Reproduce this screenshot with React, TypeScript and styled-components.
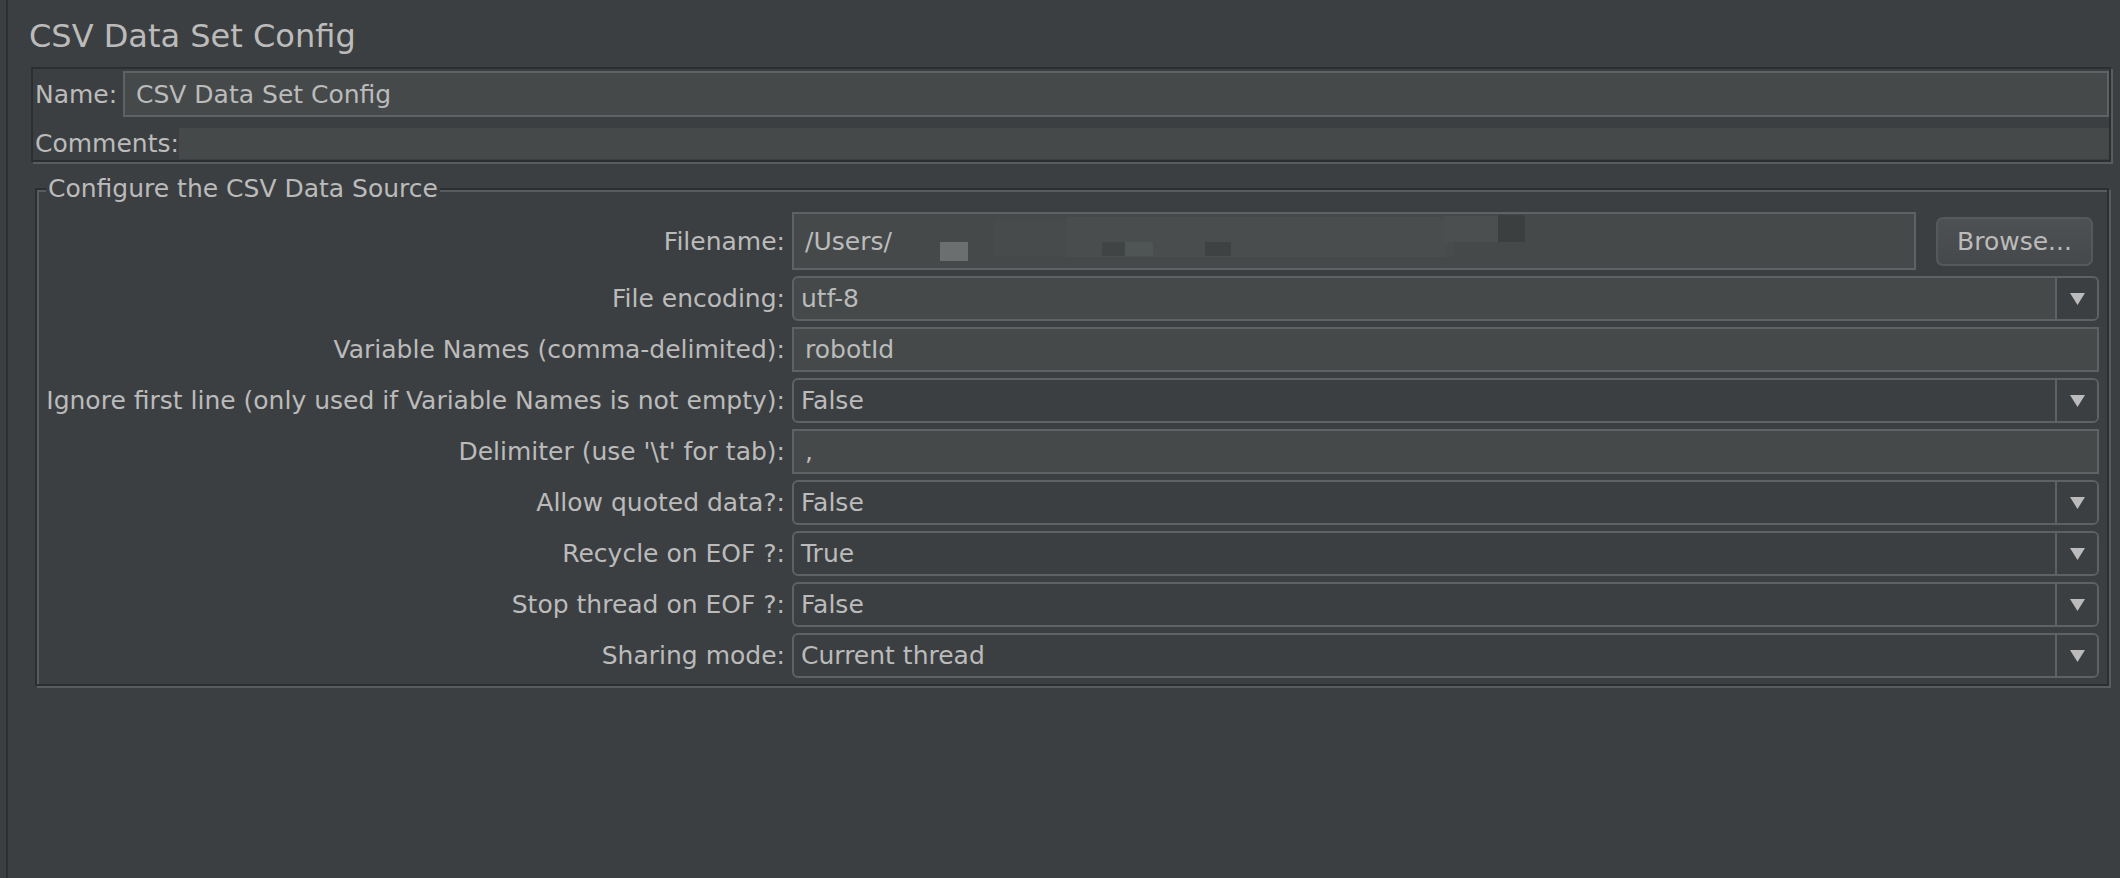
import * as React from 'react';
import styled, { createGlobalStyle } from 'styled-components';

const Colors = {
  background: '#3c3f41',
  field: '#45494a',
  border: '#5f6264',
  dark: '#2c2e2f',
  light: '#595c5e',
  text: '#bbbbbb',
};

const FontSize = 25;

const GlobalStyle = createGlobalStyle`
  html, body {
    margin: 0;
    padding: 0;
    background: ${Colors.background};
  }
  body {
    font-family: "DejaVu Sans", "Liberation Sans", sans-serif;
    color: ${Colors.text};
  }
`;

const Page = styled.div`
  box-sizing: border-box;
  display: flex;
  min-height: 878px;
  padding-left: 6px;
  background: ${Colors.background};
`;

const Main = styled.div`
  flex: 1;
  display: flex;
  flex-direction: column;
  border-left: 2px solid ${Colors.dark};
  padding: 17px 9px 0 23px;
`;

const Title = styled.div`
  font-size: 32px;
  line-height: 38px;
  height: 38px;
  margin-left: -2px;
  white-space: nowrap;
`;

const NamePanel = styled.div`
  box-sizing: border-box;
  display: flex;
  flex-direction: column;
  gap: 11px;
  margin-top: 12px;
  padding: 2px 0 1px 2px;
  border: 2px solid ${Colors.dark};
  box-shadow: 2px 2px 0 ${Colors.light};
`;

const PanelRow = styled.div<{ $height: number }>`
  display: flex;
  align-items: center;
  height: ${p => p.$height}px;
`;

const Label = styled.span`
  font-size: ${FontSize}px;
  line-height: 1;
  white-space: nowrap;
`;

const NameLabel = styled(Label)`
  width: 88px;
  flex: none;
`;

const TextField = styled.div`
  box-sizing: border-box;
  position: relative;
  flex: 1;
  display: flex;
  align-items: center;
  height: 100%;
  padding-left: 11px;
  border: 2px solid ${Colors.border};
  background: ${Colors.field};
  font-size: ${FontSize}px;
  white-space: nowrap;
  overflow: hidden;
`;

const CommentsField = styled.div`
  flex: 1;
  height: 100%;
  background: ${Colors.field};
`;

const Group = styled.fieldset`
  box-sizing: border-box;
  min-width: 0;
  margin: 12px 2px 0 4px;
  padding: 8px 8px 6px 6px;
  border: 2px solid ${Colors.dark};
  box-shadow: inset 2px 2px 0 ${Colors.light}, 2px 2px 0 ${Colors.light};
`;

const Legend = styled.legend`
  margin-left: 3px;
  padding: 0 2px;
  font-size: ${FontSize}px;
  line-height: 30px;
  background: ${Colors.background};
  white-space: nowrap;
`;

const FormGrid = styled.div`
  display: grid;
  grid-template-columns: 742px 1fr;
  grid-template-rows: 58px;
  grid-auto-rows: 45px;
  column-gap: 7px;
  row-gap: 6px;
`;

const FormLabel = styled(Label)`
  justify-self: end;
  align-self: center;
`;

const FileRow = styled.div`
  display: flex;
  align-items: center;
  height: 100%;
`;

const BrowseButton = styled.button`
  box-sizing: border-box;
  flex: none;
  width: 157px;
  height: 49px;
  margin: 0 6px 0 20px;
  padding: 0;
  border: 2px solid #56595b;
  border-radius: 7px;
  background: linear-gradient(#4d5153, #46494b);
  color: ${Colors.text};
  font-family: inherit;
  font-size: ${FontSize}px;
`;

const Combo = styled.div<{ $editable?: boolean }>`
  box-sizing: border-box;
  display: flex;
  align-items: stretch;
  height: 100%;
  border: 2px solid ${Colors.border};
  border-radius: 6px;
  background: ${p => (p.$editable ? Colors.field : Colors.background)};
  overflow: hidden;
`;

const ComboValue = styled.div`
  flex: 1;
  display: flex;
  align-items: center;
  padding-left: 7px;
  font-size: ${FontSize}px;
  white-space: nowrap;
`;

const ArrowButton = styled.div`
  box-sizing: border-box;
  flex: none;
  width: 42px;
  display: flex;
  align-items: center;
  justify-content: center;
  border-left: 2px solid ${Colors.border};
  background: ${Colors.background};
`;

// pixelated redaction over the file path
const Mosaic = styled.span<{ $color: string }>`
  position: absolute;
  background: ${p => p.$color};
`;

const mosaicBlocks = [
  { left: 200, top: 6, width: 460, height: 36, color: '#474b4c' },
  { left: 273, top: 3, width: 380, height: 40, color: '#494d4e' },
  { left: 650, top: 2, width: 55, height: 26, color: '#4b4f50' },
  { left: 146, top: 28, width: 28, height: 19, color: '#6b6f70' },
  { left: 704, top: 1, width: 27, height: 27, color: '#3b3f40' },
  { left: 308, top: 28, width: 23, height: 14, color: '#404445' },
  { left: 331, top: 28, width: 28, height: 14, color: '#4f5455' },
  { left: 411, top: 28, width: 26, height: 14, color: '#3e4243' },
];

function DownArrow() {
  return (
    <svg width="15" height="12" viewBox="0 0 15 12">
      <polygon points="0,0 15,0 7.5,12" fill={Colors.text} />
    </svg>
  );
}

function ComboBox({ value, editable }: { value: string; editable?: boolean }) {
  return (
    <Combo $editable={editable}>
      <ComboValue>{value}</ComboValue>
      <ArrowButton>
        <DownArrow />
      </ArrowButton>
    </Combo>
  );
}

interface Row {
  label: string;
  kind: 'text' | 'combo';
  value: string;
  editable?: boolean;
}

const rows: Row[] = [
  { label: 'File encoding:', kind: 'combo', value: 'utf-8', editable: true },
  { label: 'Variable Names (comma-delimited):', kind: 'text', value: 'robotId' },
  { label: 'Ignore first line (only used if Variable Names is not empty):', kind: 'combo', value: 'False' },
  { label: "Delimiter (use '\\t' for tab):", kind: 'text', value: ',' },
  { label: 'Allow quoted data?:', kind: 'combo', value: 'False' },
  { label: 'Recycle on EOF ?:', kind: 'combo', value: 'True' },
  { label: 'Stop thread on EOF ?:', kind: 'combo', value: 'False' },
  { label: 'Sharing mode:', kind: 'combo', value: 'Current thread' },
];

export default function App() {
  return (
    <Page>
      <GlobalStyle />
      <Main>
        <Title>CSV Data Set Config</Title>
        <NamePanel>
          <PanelRow $height={46}>
            <NameLabel>Name:</NameLabel>
            <TextField>CSV Data Set Config</TextField>
          </PanelRow>
          <PanelRow $height={31}>
            <Label>Comments:</Label>
            <CommentsField />
          </PanelRow>
        </NamePanel>
        <Group>
          <Legend>Configure the CSV Data Source</Legend>
          <FormGrid>
            <FormLabel>Filename:</FormLabel>
            <FileRow>
              <TextField>
                /Users/
                {mosaicBlocks.map((b, i) => (
                  <Mosaic
                    key={i}
                    $color={b.color}
                    style={{ left: b.left, top: b.top, width: b.width, height: b.height }}
                  />
                ))}
              </TextField>
              <BrowseButton>Browse...</BrowseButton>
            </FileRow>
            {rows.map(r => (
              <React.Fragment key={r.label}>
                <FormLabel>{r.label}</FormLabel>
                {r.kind === 'combo' ? (
                  <ComboBox value={r.value} editable={r.editable} />
                ) : (
                  <TextField>{r.value}</TextField>
                )}
              </React.Fragment>
            ))}
          </FormGrid>
        </Group>
      </Main>
    </Page>
  );
}
